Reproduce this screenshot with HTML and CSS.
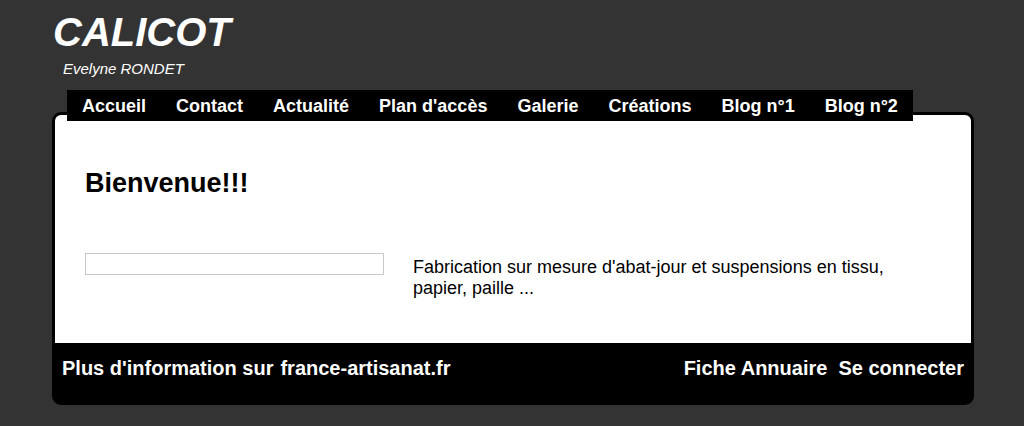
FILE: index.html
```html
<!DOCTYPE html>
<html>
<head>
<meta charset="utf-8">
<link rel="stylesheet" href="styles.css">
</head>
<body>

<div class="page">
  <div class="header">
    <h1 class="logo">CALICOT</h1>
    <div class="subtitle">Evelyne RONDET</div>
  </div>

  <ul class="menu">
    <li>Accueil</li>
    <li>Contact</li>
    <li>Actualité</li>
    <li>Plan d'accès</li>
    <li>Galerie</li>
    <li>Créations</li>
    <li>Blog n°1</li>
    <li>Blog n°2</li>
  </ul>

  <div class="frame">
    <div class="main">
      <h2>Bienvenue!!!</h2>
      <div class="row">
        <div class="col-left">
          <div class="picture"></div>
        </div>
        <div class="col-right">
          Fabrication sur mesure d'abat-jour et suspensions en tissu, papier, paille ...
        </div>
      </div>
    </div>
    <div class="footer">
      <div class="footer-left">
        <span>Plus d'information sur</span>
        <span>france-artisanat.fr</span>
      </div>
      <div class="footer-right">
        <span>Fiche Annuaire</span>
        <span>Se connecter</span>
      </div>
    </div>
  </div>
</div>

</body>
</html>
```

FILE: styles.css
```css
* {box-sizing: border-box;}
body {
  margin: 0;
  background: #333333;
  font-family: "Liberation Sans", Arial, sans-serif;
  color: #fff;
}

.page {
  width: 922px;
  margin-left: 52px;
}

.header {
  padding-top: 9px;
}

.logo {
  margin: 0 0 0 1px;
  font-size: 40px;
  line-height: 46px;
  font-style: italic;
  font-weight: bold;
}

.subtitle {
  margin-top: 5px;
  padding-left: 11px;
  font-size: 15px;
  line-height: 17px;
  font-style: italic;
}

.menu {
  display: flex;
  width: fit-content;
  position: relative;
  z-index: 1;
  list-style-type: none;
  margin: 13px 0 -9px 15px;
  padding: 0;
  background: #000;
}

.menu li {
  padding: 2px 15px 0 15px;
  height: 31px;
  font-size: 18px;
  font-weight: bold;
  line-height: 29px;
}

.frame {
  border: 3px solid #000;
  border-radius: 9px;
  background: #000;
}

.main {
  background: #fff;
  color: #000;
  border-radius: 6px 6px 0 0;
  padding: 53px 30px 44px 30px;
}

.main h2 {
  margin: 0;
  font-size: 27px;
  line-height: 31px;
  font-weight: bold;
}

.row {
  display: flex;
  align-items: flex-start;
  margin-top: 54px;
}

.col-left {
  width: 328px;
  flex-shrink: 0;
}

.picture {
  width: 299px;
  height: 22px;
  border: 1px solid #c8c8c8;
}

.col-right {
  width: 500px;
  padding-top: 4px;
  font-size: 18px;
  line-height: 21px;
}

.footer {
  display: flex;
  justify-content: space-between;
  padding: 14px 7px 22px 7px;
  font-size: 20px;
  font-weight: bold;
  line-height: 23px;
}

.footer-left, .footer-right {
  display: flex;
}

.footer-left {gap: 7px;}
.footer-right {gap: 11px;}
```
